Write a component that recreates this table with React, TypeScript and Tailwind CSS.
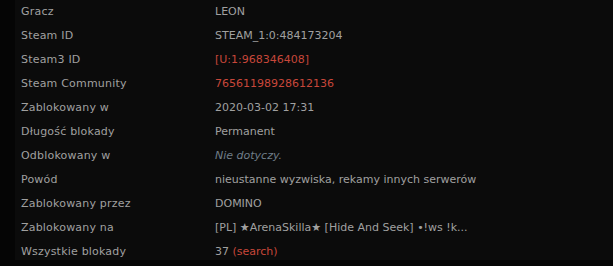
const rows: { label: string; value: React.ReactNode }[] = [
  { label: 'Gracz', value: 'LEON' },
  { label: 'Steam ID', value: 'STEAM_1:0:484173204' },
  { label: 'Steam3 ID', value: <span className="text-[#c8473a]">[U:1:968346408]</span> },
  { label: 'Steam Community', value: <span className="text-[#c8473a]">76561198928612136</span> },
  { label: 'Zablokowany w', value: '2020-03-02 17:31' },
  { label: 'Długość blokady', value: 'Permanent' },
  { label: 'Odblokowany w', value: <span className="italic text-[#6f7d88]">Nie dotyczy.</span> },
  { label: 'Powód', value: 'nieustanne wyzwiska, rekamy innych serwerów' },
  { label: 'Zablokowany przez', value: 'DOMINO' },
  { label: 'Zablokowany na', value: '[PL] ★ArenaSkilla★ [Hide And Seek] •!ws !k...' },
  {
    label: 'Wszystkie blokady',
    value: (
      <>
        37 <span className="text-[#c8473a]">(search)</span>
      </>
    ),
  },
]

export default function App() {
  return (
    <div className="w-[613px] h-[266px] bg-[#050505] flex overflow-hidden font-['DejaVu_Sans',Verdana,sans-serif] text-[11px] text-[#a0a0a0]">
      <div className="w-[15px] shrink-0" />
      <div className="flex-1 h-[260px] bg-[#0b0b0b] overflow-hidden">
        <div className="pl-[6px]">
          {rows.map(r => (
            <div key={r.label} className="flex h-6 items-center leading-6">
              <div className="w-[194px] shrink-0 tracking-[0.2px]">{r.label}</div>
              <div className="whitespace-nowrap">{r.value}</div>
            </div>
          ))}
        </div>
      </div>
    </div>
  )
}
